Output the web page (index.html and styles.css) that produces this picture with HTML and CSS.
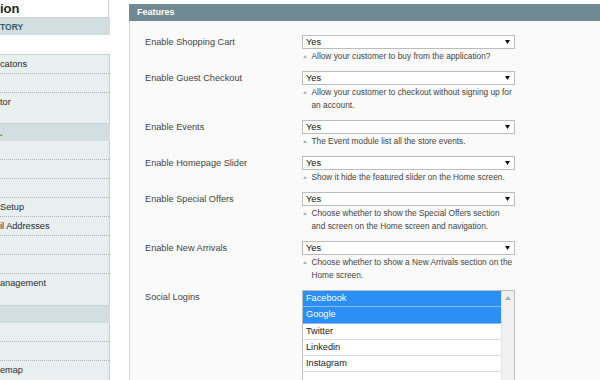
FILE: index.html
```html
<!DOCTYPE html>
<html lang="en">
<head>
    <meta charset="UTF-8">
    <meta name="viewport" content="width=device-width, initial-scale=1.0">
    <title>Configuration</title>
    <link rel="stylesheet" href="styles.css">
</head>
<body>
<div class="page">
    <div class="side-col">
        <div class="side-title">ion</div>
        <div class="side-group">TORY</div>
        <ul class="side-tabs first">
            <li>catons</li>
            <li></li>
            <li>tor</li>
        </ul>
        <div class="side-group">.</div>
        <ul class="side-tabs">
            <li></li>
            <li></li>
            <li></li>
            <li>Setup</li>
            <li>il Addresses</li>
            <li></li>
            <li></li>
            <li>anagement</li>
        </ul>
        <div class="side-group"></div>
        <ul class="side-tabs">
            <li></li>
            <li></li>
            <li>emap</li>
        </ul>
    </div>

    <div class="main-col">
        <div class="fieldset-head">Features</div>
        <div class="fieldset">
            <div class="form-row">
                <div class="form-label">Enable Shopping Cart</div>
                <div class="form-value">
                    <div class="select"><span>Yes</span><svg width="5" height="4" viewBox="0 0 5 4"><path d="M0 0h5L2.5 4z" fill="#111"/></svg></div>
                    <p class="note"><span class="tri"></span>Allow your customer to buy from the application?</p>
                </div>
            </div>
            <div class="form-row">
                <div class="form-label">Enable Guest Checkout</div>
                <div class="form-value">
                    <div class="select"><span>Yes</span><svg width="5" height="4" viewBox="0 0 5 4"><path d="M0 0h5L2.5 4z" fill="#111"/></svg></div>
                    <p class="note"><span class="tri"></span>Allow your customer to checkout without signing up for an account.</p>
                </div>
            </div>
            <div class="form-row">
                <div class="form-label">Enable Events</div>
                <div class="form-value">
                    <div class="select"><span>Yes</span><svg width="5" height="4" viewBox="0 0 5 4"><path d="M0 0h5L2.5 4z" fill="#111"/></svg></div>
                    <p class="note"><span class="tri"></span>The Event module list all the store events.</p>
                </div>
            </div>
            <div class="form-row">
                <div class="form-label">Enable Homepage Slider</div>
                <div class="form-value">
                    <div class="select"><span>Yes</span><svg width="5" height="4" viewBox="0 0 5 4"><path d="M0 0h5L2.5 4z" fill="#111"/></svg></div>
                    <p class="note"><span class="tri"></span>Show it hide the featured slider on the Home screen.</p>
                </div>
            </div>
            <div class="form-row">
                <div class="form-label">Enable Special Offers</div>
                <div class="form-value">
                    <div class="select"><span>Yes</span><svg width="5" height="4" viewBox="0 0 5 4"><path d="M0 0h5L2.5 4z" fill="#111"/></svg></div>
                    <p class="note"><span class="tri"></span>Choose whether to show the Special Offers section and screen on the Home screen and navigation.</p>
                </div>
            </div>
            <div class="form-row">
                <div class="form-label">Enable New Arrivals</div>
                <div class="form-value">
                    <div class="select"><span>Yes</span><svg width="5" height="4" viewBox="0 0 5 4"><path d="M0 0h5L2.5 4z" fill="#111"/></svg></div>
                    <p class="note"><span class="tri"></span>Choose whether to show a New Arrivals section on the Home screen.</p>
                </div>
            </div>
            <div class="form-row">
                <div class="form-label">Social Logins</div>
                <div class="form-value">
                    <div class="multi">
                        <ul>
                            <li class="selected">Facebook</li>
                            <li class="selected">Google</li>
                            <li>Twitter</li>
                            <li>Linkedin</li>
                            <li>Instagram</li>
                            <li></li>
                        </ul>
                        <div class="scroll">
                            <svg width="6" height="4" viewBox="0 0 6 4"><path d="M0 4h6L3 0z" fill="#a9a9a9"/></svg>
                        </div>
                    </div>
                </div>
            </div>
        </div>
    </div>
</div>
</body>
</html>
```

FILE: styles.css
```css
        body {
            margin: 0;
            font-family: "Liberation Sans", Arial, sans-serif;
            font-size: 9.2px;
            color: #333;
            background: #fff;
            overflow: hidden;
        }
        .page {
            display: flex;
            gap: 19px;
            height: 380px;
        }

        /* left column */
        .side-col {
            width: 110px;
            flex: none;
        }
        .side-title {
            height: 17px;
            line-height: 17px;
            margin-right: 1px;
            background: #fff;
            border-right: 1px solid #cfcfcf;
            border-bottom: 1px solid #cfcfcf;
            font-size: 13px;
            font-weight: bold;
            color: #262626;
        }
        .side-group {
            height: 17px;
            line-height: 18px;
            background: #d1dfe1;
            font-size: 8.5px;
            font-weight: bold;
            color: #2f5e6a;
        }
        .side-tabs {
            list-style: none;
            margin: 0;
            padding: 0 0 13px;
            background: #e7efef;
            border-right: 1px solid #c4d2d4;
            border-bottom: 1px solid #c4d2d4;
        }
        .side-tabs.first {
            margin-top: 19px;
            border-top: 1px solid #c4d2d4;
            padding-bottom: 12px;
        }
        .side-tabs li {
            height: 18px;
            line-height: 18px;
            border-bottom: 1px dotted #a7b3b5;
            white-space: nowrap;
            overflow: hidden;
            color: #2b2b2b;
        }
        .side-tabs li:last-child {
            border-bottom: none;
        }

        /* main column */
        .main-col {
            flex: 1;
            padding-top: 4px;
        }
        .fieldset-head {
            height: 17px;
            line-height: 17px;
            padding-left: 8px;
            background: #6f8a93;
            color: #fff;
            font-size: 9px;
            font-weight: bold;
        }
        .fieldset {
            height: 400px;
            padding: 14px 0 0 15px;
            background: #fafafa;
            border-left: 1px solid #d6d6d6;
        }
        .form-row {
            display: grid;
            grid-template-columns: 157px 213px;
        }
        .form-label {
            line-height: 14px;
            color: #444;
        }
        .select {
            box-sizing: border-box;
            height: 14px;
            padding: 0 4px 0 3px;
            display: flex;
            align-items: center;
            justify-content: space-between;
            background: #fff;
            border: 1px solid #bcbcbc;
            color: #111;
        }
        .note {
            margin: 1px 0 8px;
            padding-left: 9.5px;
            text-indent: -8.5px;
            font-size: 8.3px;
            line-height: 13px;
            color: #444;
        }
        .tri {
            display: inline-block;
            width: 0;
            height: 0;
            margin-right: 4.5px;
            border-left: 2px solid transparent;
            border-right: 2px solid transparent;
            border-bottom: 3px solid #a9b6ba;
            vertical-align: 1px;
            text-indent: 0;
        }
        .multi {
            display: flex;
            height: 100px;
            background: #fff;
            border: 1px solid #bcbcbc;
        }
        .multi ul {
            flex: 1;
            list-style: none;
            margin: 0;
            padding: 0;
        }
        .multi li {
            box-sizing: border-box;
            height: 16.3px;
            line-height: 15.3px;
            padding-left: 3px;
            border-bottom: 1px solid #dcdcdc;
            color: #222;
        }
        .multi li.selected {
            background: #2b8ff6;
            color: #fff;
            border-bottom-color: #86bdf6;
        }
        .scroll {
            width: 12px;
            padding-top: 5px;
            display: flex;
            justify-content: center;
            align-items: flex-start;
            background: #f0f0f0;
            border-left: 1px solid #e4e4e4;
        }
```
